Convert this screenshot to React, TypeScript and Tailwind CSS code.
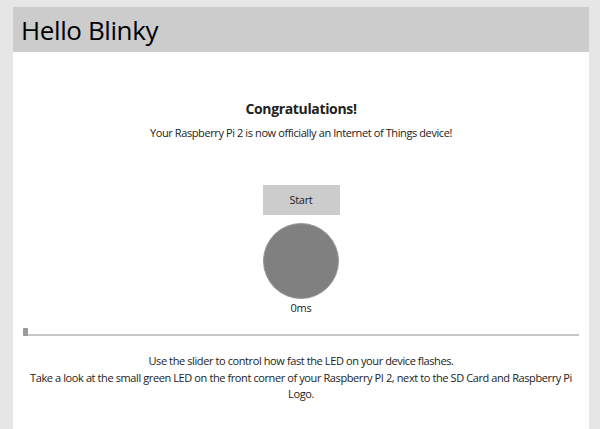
import React from "react";

export default function App() {
  return (
    <div className="w-[600px] h-[429px] bg-[#e6e6e6] overflow-hidden pt-[7px] pl-[13px] pr-[11px] font-['Open_Sans',sans-serif] text-[#222]">
      <div className="bg-white h-full flex flex-col">
        <div className="bg-[#cccccc] h-[45px] flex items-center pl-[8px]">
          <h1 className="text-[26px] leading-none text-black tracking-[-0.4px]">Hello Blinky</h1>
        </div>
        <div className="flex flex-col items-center pt-[48px]">
          <div className="text-[14px] font-bold leading-[18px] tracking-[-0.35px]">Congratulations!</div>
          <div className="text-[11px] leading-[16px] mt-[7px] tracking-[-0.4px]">Your Raspberry Pi 2 is now officially an Internet of Things device!</div>
          <button className="mt-[44px] w-[77px] h-[30px] bg-[#cccccc] text-[11px] tracking-[-0.3px] text-[#222]">Start</button>
          <div className="mt-[8px] w-[76px] h-[76px] rounded-full bg-[#808080] border border-[#999]"></div>
          <div className="text-[11px] leading-[16px] tracking-[-0.3px] mt-[1px]">0ms</div>
        </div>
        <div className="relative mx-[10px] mt-[12px] h-[10px]">
          <div className="absolute left-0 right-0 top-[6px] h-[2px] bg-[#c6c6c6]"></div>
          <div className="absolute left-0 top-0 w-[5px] h-[8px] bg-[#9a9a9a] rounded-[1px]"></div>
        </div>
        <div className="text-center text-[11px] leading-[16.5px] tracking-[-0.4px] mt-[15px] mx-[10px]">
          Use the slider to control how fast the LED on your device flashes.
          <br />
          Take a look at the small green LED on the front corner of your Raspberry PI 2, next to the SD Card and Raspberry Pi Logo.
        </div>
      </div>
    </div>
  );
}
